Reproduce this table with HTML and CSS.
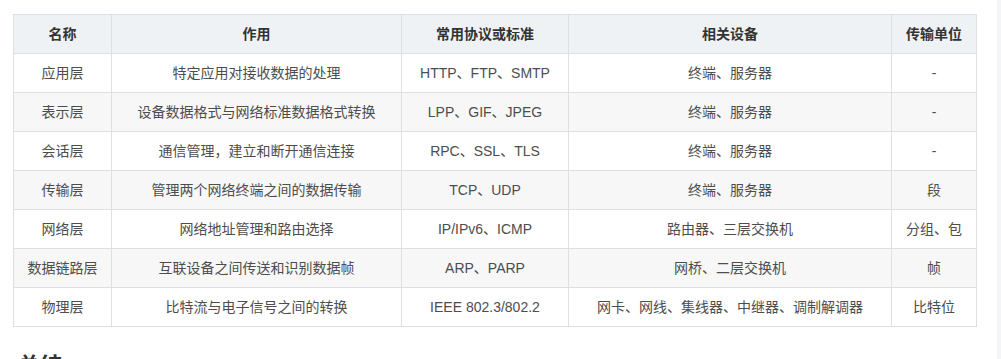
FILE: index.html
```html
<!DOCTYPE html>
<html lang="zh-CN">
<head>
<meta charset="utf-8">
<link rel="stylesheet" href="styles.css">
</head>
<body>
<div class="page">
  <div class="content">
    <table class="osi">
      <colgroup>
        <col class="c1"><col class="c2"><col class="c3"><col class="c4"><col class="c5">
      </colgroup>
      <thead>
        <tr><th>名称</th><th>作用</th><th>常用协议或标准</th><th>相关设备</th><th>传输单位</th></tr>
      </thead>
      <tbody>
        <tr><td>应用层</td><td>特定应用对接收数据的处理</td><td>HTTP、FTP、SMTP</td><td>终端、服务器</td><td>-</td></tr>
        <tr><td>表示层</td><td>设备数据格式与网络标准数据格式转换</td><td>LPP、GIF、JPEG</td><td>终端、服务器</td><td>-</td></tr>
        <tr><td>会话层</td><td>通信管理，建立和断开通信连接</td><td>RPC、SSL、TLS</td><td>终端、服务器</td><td>-</td></tr>
        <tr><td>传输层</td><td>管理两个网络终端之间的数据传输</td><td>TCP、UDP</td><td>终端、服务器</td><td>段</td></tr>
        <tr><td>网络层</td><td>网络地址管理和路由选择</td><td>IP/IPv6、ICMP</td><td>路由器、三层交换机</td><td>分组、包</td></tr>
        <tr><td>数据链路层</td><td>互联设备之间传送和识别数据帧</td><td>ARP、PARP</td><td>网桥、二层交换机</td><td>帧</td></tr>
        <tr><td>物理层</td><td>比特流与电子信号之间的转换</td><td>IEEE 802.3/802.2</td><td>网卡、网线、集线器、中继器、调制解调器</td><td>比特位</td></tr>
      </tbody>
    </table>
    <h3 class="next">总结</h3>
  </div>
  <div class="edge"></div>
</div>
</body>
</html>
```
FILE: styles.css
```css
html, body {
  margin: 0;
  padding: 0;
  background: #fff;
}
body {
  font-family: "Liberation Sans", "Noto Sans CJK SC", sans-serif;
  font-size: 14px;
  color: #4d4d4d;
  overflow: hidden;
}
.page {
  display: flex;
  width: 1001px;
  height: 359px;
  overflow: hidden;
}
.content {
  flex: 1;
  padding: 14px 0 0 13px;
}
.edge {
  width: 4px;
  background: #f4f5f6;
}
.osi {
  border-collapse: collapse;
  width: 963px;
  table-layout: fixed;
}
.c1 { width: 98px; }
.c2 { width: 290px; }
.c3 { width: 167px; }
.c4 { width: 323px; }
.c5 { width: 85px; }
.osi th, .osi td {
  border: 1px solid #dcdfe3;
  text-align: center;
  padding: 0 4px;
  height: 39px;
  line-height: 20px;
  box-sizing: border-box;
}
.osi th {
  background: #eff2f5;
  color: #333;
  font-weight: bold;
}
.osi tbody tr:nth-child(even) td {
  background: #f7f7f7;
}
.next {
  margin: 24px 0 0 5px;
  font-size: 22px;
  line-height: 30px;
  color: #333;
  font-weight: bold;
}
```
